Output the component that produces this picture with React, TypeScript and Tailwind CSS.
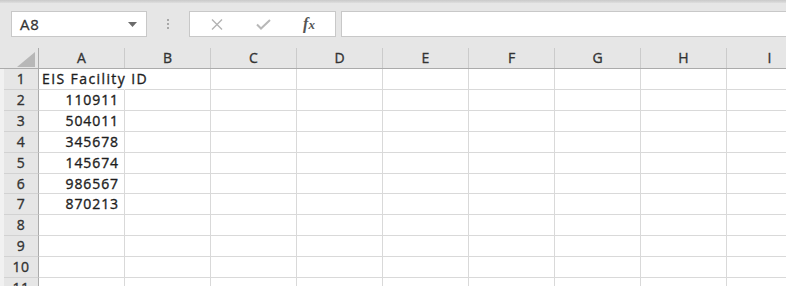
import React from "react";

const cols = ["A", "B", "C", "D", "E", "F", "G", "H", "I"];

type Row = { n: number; v?: string; h: string; overflow?: boolean };

const rows: Row[] = [
  { n: 1, v: "EIS Facility ID", h: "h-[21px]", overflow: true },
  { n: 2, v: "110911", h: "h-[21px]" },
  { n: 3, v: "504011", h: "h-[21px]" },
  { n: 4, v: "345678", h: "h-[21px]" },
  { n: 5, v: "145674", h: "h-[21px]" },
  { n: 6, v: "986567", h: "h-[20px]" },
  { n: 7, v: "870213", h: "h-[21px]" },
  { n: 8, h: "h-[21px]" },
  { n: 9, h: "h-[21px]" },
  { n: 10, h: "h-[21px]" },
  { n: 11, h: "h-[21px]" },
];

export default function App() {
  return (
    <div className="w-[786px] h-[286px] overflow-hidden bg-white font-['Open_Sans',sans-serif] text-[14px] text-[#222]">
      <div className="h-[3px] bg-gradient-to-b from-[#c9c9c9] to-[#dedede]" />
      <div className="h-[45px] bg-[#e6e6e6] flex items-start pt-[8px] pl-[11px]">
        <div className="w-[136px] h-[26px] bg-white border border-[#c8c8c8] flex items-center justify-between pl-[8px] pr-[9px]">
          <span className="text-[15px] text-[#333] tracking-[0.8px] [-webkit-text-stroke:0.3px_#333]">A8</span>
          <svg width="9" height="5" viewBox="0 0 9 5">
            <polygon points="0,0 9,0 4.5,5" fill="#6b6b6b" />
          </svg>
        </div>
        <div className="w-[42px] h-[26px] flex flex-col items-center justify-center gap-[2px]">
          <div className="w-[2px] h-[2px] bg-[#a8a8a8]" />
          <div className="w-[2px] h-[2px] bg-[#a8a8a8]" />
          <div className="w-[2px] h-[2px] bg-[#a8a8a8]" />
        </div>
        <div className="w-[147px] h-[26px] bg-white border border-[#c8c8c8] flex items-center">
          <div className="w-[52px] flex justify-center pl-[1px]">
            <svg width="12" height="11" viewBox="0 0 12 11">
              <path d="M1 0.5 L11 10.5 M11 0.5 L1 10.5" stroke="#b3b3b3" strokeWidth="1.4" fill="none" />
            </svg>
          </div>
          <div className="w-[42px] flex justify-center">
            <svg width="15" height="11" viewBox="0 0 15 11">
              <path d="M1 5.5 L5 9.5 L14 1" stroke="#b8b8b8" strokeWidth="2" fill="none" />
            </svg>
          </div>
          <div className="w-[50px] flex justify-center">
            <span className="font-['Liberation_Serif',serif] italic font-bold text-[16px] text-[#555] leading-none">
              f<span className="text-[13px]">x</span>
            </span>
          </div>
        </div>
        <div className="ml-[5px] flex-1 h-[26px] bg-white border border-r-0 border-[#c8c8c8]" />
      </div>

      <div className="flex h-[21px] bg-[#e6e6e6] border-b border-[#ababab]">
        <div className="w-[39px] shrink-0 border-r border-[#ababab] flex items-end justify-end pr-[3px] pb-[1px]">
          <svg width="18" height="15" viewBox="0 0 18 15">
            <polygon points="18,0 18,15 0,15" fill="#b7b7b7" />
          </svg>
        </div>
        {cols.map((c) => (
          <div
            key={c}
            className="w-[86px] shrink-0 border-r border-[#cbcbcb] text-center leading-[20px] text-[#333] [-webkit-text-stroke:0.35px_#333]"
          >
            {c}
          </div>
        ))}
      </div>

      {rows.map((r) => (
        <div key={r.n} className={`flex ${r.h}`}>
          <div className="w-[4px] shrink-0 bg-[#f1f1f1]" />
          <div className="w-[35px] shrink-0 bg-[#e6e6e6] border-r border-b border-r-[#ababab] border-b-[#d2d2d2] text-center text-[#333] leading-[20px] tracking-[0.6px] [-webkit-text-stroke:0.35px_#333]">
            {r.n}
          </div>
          {cols.map((c) => {
            const isA = c === "A";
            const borderR = isA && r.overflow ? "border-r-white" : "border-r-[#d9d9d9]";
            return (
              <div
                key={c}
                className={`w-[86px] shrink-0 border-r border-b border-b-[#d9d9d9] ${borderR} leading-[20px] whitespace-nowrap ${
                  isA ? (r.overflow ? "pl-[3px] relative z-10" : "text-right pr-[5px]") : ""
                }`}
              >
                {isA && r.v ? (
                  <span
                    className={`text-[#1e1e1e] [-webkit-text-stroke:0.35px_#1e1e1e] ${
                      r.overflow ? "tracking-[1.4px]" : "tracking-[0.9px]"
                    }`}
                  >
                    {r.v}
                  </span>
                ) : null}
              </div>
            );
          })}
        </div>
      ))}
    </div>
  );
}
